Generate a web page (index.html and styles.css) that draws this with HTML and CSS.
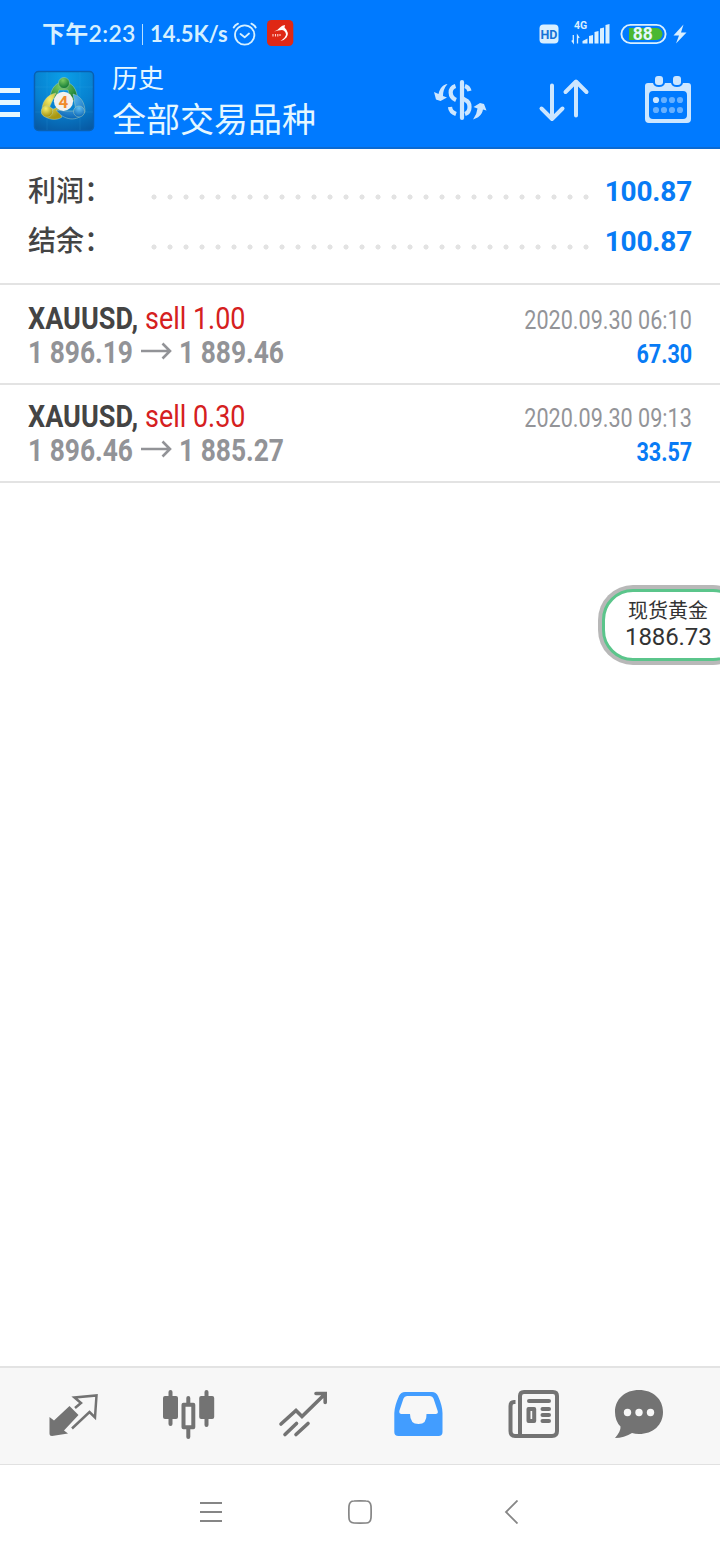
FILE: index.html
```html
<!DOCTYPE html>
<html lang="zh-CN">
<head>
<meta charset="utf-8">
<title>历史</title>
<link rel="stylesheet" href="styles.css">
</head>
<body>
<div class="screen">
  <header class="header">
    <div class="status">
      <span class="clock">下午2:23</span>
      <span class="divider"></span>
      <span class="speed">14.5K/s</span>
      <svg class="alarm" width="26" height="26" viewBox="232 21 26 26"><g fill="none" stroke="#d6f0ff" stroke-width="1.8" stroke-linecap="round" stroke-linejoin="round"><circle cx="244.7" cy="35" r="9.7"/><path d="M233.7 27.5Q235 25 238 23.600M255.700 27.500Q254.400 25 251.400 23.600M240.500 34L244.700 37.300 249 33.500"/></g></svg>
      <svg class="app-badge" width="27" height="27" viewBox="267 20 27 27"><rect x="267" y="20" width="26.300" height="26" rx="4.500" fill="#df2815"/><path d="M274 31.500Q278 30 280 27.500Q282 25.300 285 25L284.500 27.500Q290 33 286.500 37.500Q284.500 40 280.500 41Q285.500 37.500 286 34.500Q285.500 30.500 282 30Q278 30.200 274 31.500Z" fill="#fff"/><path d="M273 34v2.500M275.500 34v2.500M277.800 34v2.500M280 34v2" stroke="#ffd4ce" stroke-width="1.100"/></svg>
      <svg class="status-right" width="150" height="30" viewBox="538 19 150 30">
        <rect x="539.500" y="24.500" width="19" height="19" rx="4" fill="#d9efff"/>
        <text x="549" y="38.700" class="hd">HD</text>
        <text x="574" y="29" class="net">4G</text>
        <path d="M573.300 35v7.500l-1.500-2M577.500 43.500v-8l1.700 2.500" fill="none" stroke="#d9efff" stroke-width="1.300"/>
        <path d="M582.500 41l5-2.500v5h-5zM589 36l4-1v8.500h-4zM594.500 32l4-1v12.500h-4zM600 28.500l4-1v16h-4zM605.500 25l4-1v19.500h-4z" fill="#d9efff"/>
        <rect x="621.400" y="24.900" width="44.200" height="18.200" rx="9.100" fill="none" stroke="#d9efff" stroke-width="1.900"/>
        <path d="M629 28h27.500a6 6 0 0 1 0 12H629z" fill="#4bb832"/>
        <text x="642.700" y="40.300" class="battery">88</text>
        <path d="M683.500 24.500L673.500 35.500H679L676 43.500 686.500 32.500H681Z" fill="#d9efff"/>
      </svg>
    </div>
    <div class="toolbar">
      <div class="menu"><i></i><i></i><i></i></div>
      <svg class="logo" width="62" height="62" viewBox="33 70 62 62">
        <defs>
          <radialGradient id="bg" cx=".5" cy=".1" r="1"><stop offset="0" stop-color="#0a9fe8"/><stop offset=".55" stop-color="#0780cf"/><stop offset="1" stop-color="#0757a0"/></radialGradient>
          <radialGradient id="green" cx=".4" cy=".25" r=".7"><stop offset="0" stop-color="#7dcc62"/><stop offset="1" stop-color="#147c35"/></radialGradient>
          <radialGradient id="gold" cx=".4" cy=".25" r=".7"><stop offset="0" stop-color="#f6ee6b"/><stop offset="1" stop-color="#a79613"/></radialGradient>
          <radialGradient id="blue" cx=".5" cy=".2" r=".8"><stop offset="0" stop-color="#62bff2"/><stop offset="1" stop-color="#0b67b8"/></radialGradient>
        </defs>
        <rect x="34.500" y="71.500" width="59" height="59" rx="4" fill="url(#bg)" stroke="#0960b2" stroke-width="1.500"/>
        <path d="M47 72v58M80 72v58M35 87h58M35 112h58" stroke="#42b3ee" stroke-width=".5" opacity=".3"/>
        <g stroke="#b8d6b8" stroke-width=".45">
          <path d="M50 98C51 88 56 82 64 82C72 82 77 89 77.500 99L71 101L68 90H59L56 99Z" fill="url(#green)"/>
          <path d="M56 93C46 95 41 103 42 114C47 120 57 121 62 117L57 107L54 109L49 108Z" fill="url(#gold)"/>
          <path d="M73 94C81 96 85 103 85 112C78 122 64 121 56 110L65 111L76 111Z" fill="url(#blue)"/>
          <circle cx="64" cy="83" r="5.500" fill="url(#green)"/><circle cx="47" cy="111.500" r="5.700" fill="url(#gold)"/><circle cx="79" cy="111.500" r="5.500" fill="url(#blue)"/>
        </g>
        <circle cx="63.500" cy="101.300" r="9.600" fill="#f3f0ed"/>
        <text x="63.500" y="107.500" class="logo-number">4</text>
      </svg>
      <div class="titles"><div class="subtitle">历史</div><div class="title">全部交易品种</div></div>
      <svg class="currency" width="56" height="44" viewBox="432 78 56 44">
        <g fill="none" stroke="#cce6ff"><path d="M462 82V118" stroke-width="4.200" stroke-linecap="round"/><path d="M455.500 86C449 88 449 97 456 100M465 86Q468.500 87 469.500 91M450 107Q450.500 112 456 114M465 100C471 102 471 112 465 114M462 98L467 101" stroke-width="4.200"/></g>
        <path d="M447.500 84C443 84.500 440 88 438.500 94L434 92 436 99.500 440.500 101 447 97.500 443 96Q443 89 447.500 84ZM473 119.500C478 118 482 115 483 109.500L486.500 110.500 484 104 480 103 473.500 107 477.500 108.500Q477 114 473 119.500Z" fill="#cce6ff"/>
      </svg>
      <svg class="sort" width="52" height="46" viewBox="538 77 52 46"><path d="M552 85.500V119M541.500 108.500L552 119 562.500 108.500M576 115.500V82M565.500 92L576 81.500 586.500 92" fill="none" stroke="#cce6ff" stroke-width="4" stroke-linecap="round" stroke-linejoin="round"/></svg>
      <svg class="calendar" width="48" height="50" viewBox="644 75 48 50">
        <path fill="#cce6ff" fill-rule="evenodd" d="M648 83H653Q654 87 659 87T665 83H671Q672 87 677 87T683 83H688Q691 83 691 86V119Q691 123 687 123H649Q645 123 645 119V86Q645 83 648 83ZM653 91Q649 91 649 95V115Q649 119 653 119H683Q687 119 687 115V95Q687 91 683 91Z"/>
        <rect x="655" y="76" width="8" height="9" rx="3" fill="#cce6ff"/><rect x="673" y="76" width="8" height="9" rx="3" fill="#cce6ff"/>
        <g fill="#66b0ff"><circle cx="656" cy="100" r="3.100" fill="#cce6ff"/><circle cx="664" cy="100" r="3.100"/><circle cx="672" cy="100" r="3.100"/><circle cx="680" cy="100" r="3.100"/><circle cx="656" cy="110" r="3.100"/><circle cx="664" cy="110" r="3.100"/><circle cx="672" cy="110" r="3.100"/><circle cx="680" cy="110" r="3.100"/></g>
      </svg>
    </div>
  </header>

  <main class="content">
    <section class="summary">
      <div class="sum-row"><span class="label">利润：</span><span class="dots"></span><span class="total">100.87</span></div>
      <div class="sum-row"><span class="label">结余：</span><span class="dots"></span><span class="total">100.87</span></div>
    </section>
    <article class="deal first">
      <div class="left"><div class="line"><b class="symbol">XAUUSD,</b><span class="side">sell 1.00</span></div>
      <div class="line prices"><span class="price">1 896.19</span><svg class="arrow" width="32" height="18" viewBox="0 0 32 18"><path d="M1 9H30M22.500 1.500L30 9 22.500 16.500" fill="none" stroke="#929397" stroke-width="2.600"/></svg><span class="price">1 889.46</span></div></div>
      <div class="right"><span class="date">2020.09.30 06:10</span><b class="profit">67.30</b></div>
    </article>
    <article class="deal">
      <div class="left"><div class="line"><b class="symbol">XAUUSD,</b><span class="side">sell 0.30</span></div>
      <div class="line prices"><span class="price">1 896.46</span><svg class="arrow" width="32" height="18" viewBox="0 0 32 18"><path d="M1 9H30M22.500 1.500L30 9 22.500 16.500" fill="none" stroke="#929397" stroke-width="2.600"/></svg><span class="price">1 885.27</span></div></div>
      <div class="right"><span class="date">2020.09.30 09:13</span><b class="profit">33.57</b></div>
    </article>
  </main>

  <nav class="tabs">
    <svg class="tab-quotes" width="52" height="46" viewBox="48 1392 52 46"><path d="M49.500 1417L54 1420.500 69.500 1406 78.500 1415 64 1430.500 68 1433.500 52 1436Q49.500 1436 49.500 1433.500Z" fill="#737373"/><path d="M75 1408L81 1403 74.500 1397.500 96.500 1395.500 95 1417.500 89.500 1412 72 1428.500" fill="none" stroke="#737373" stroke-width="2.500"/></svg>
    <svg class="tab-chart" width="54" height="52" viewBox="162 1388 54 52"><path d="M170.500 1392V1424M206.500 1392V1425M188.300 1398V1405M188.300 1427V1437" stroke="#737373" stroke-width="4" stroke-linecap="round"/><rect x="163" y="1396" width="15" height="23" rx="2" fill="#737373"/><rect x="199.200" y="1396" width="15" height="23" rx="2" fill="#737373"/><rect x="183.500" y="1404.800" width="9.800" height="22.500" fill="#f7f7f7" stroke="#737373" stroke-width="4" stroke-linejoin="round"/></svg>
    <svg class="tab-trade" width="50" height="48" viewBox="278 1390 50 48"><path d="M281 1424L296 1410.500 302 1416.500 325 1394M316 1393.500H325.200V1402.500M285 1434.500L296.500 1423.500M296 1434.500L308 1423.500" fill="none" stroke="#737373" stroke-width="3.600" stroke-linecap="round"/></svg>
    <svg class="tab-history" width="50" height="46" viewBox="393 1391 50 46"><path fill="#429dff" fill-rule="evenodd" d="M405 1392H432Q436 1392 438 1396Q442.500 1406 442.500 1413V1432Q442.500 1436 438.500 1436H398.500Q394.300 1436 394.300 1432V1413Q394.500 1406 399 1396Q401 1392 405 1392ZM407 1396Q404.500 1396 403.500 1398.500L399.300 1411Q399 1414 401.500 1414H410Q410 1424 418.500 1424T426.500 1414H435.500Q438.500 1414 437.700 1411L433.500 1398.500Q432.500 1396 430 1396Z"/></svg>
    <svg class="tab-news" width="52" height="50" viewBox="508 1389 52 50"><path d="M515.500 1402H514Q510.500 1402 510.500 1406V1431Q510.500 1436 515 1436H552Q557 1436 557 1431V1396Q557 1392 553 1392H524Q520 1392 520 1396V1436" fill="none" stroke="#737373" stroke-width="4"/><path d="M529 1401H549M542.500 1409H549M542.500 1415H549M542.500 1421H549" stroke="#737373" stroke-width="4" stroke-linecap="round"/><rect x="528.500" y="1409" width="5.700" height="12" fill="#f7f7f7" stroke="#737373" stroke-width="4" stroke-linejoin="round"/></svg>
    <svg class="tab-chat" width="50" height="50" viewBox="614 1389 50 50"><path d="M639 1390C653 1390 663 1399 663 1412S653 1434 639 1434Q635 1434 632 1433Q624 1438 615 1438Q621 1431 620.500 1426.500Q615 1421 615 1412C615 1399 625 1390 639 1390Z" fill="#737373"/><g fill="#f7f7f7"><circle cx="627.500" cy="1412.500" r="3.700"/><circle cx="639" cy="1412.500" r="3.700"/><circle cx="650.500" cy="1412.500" r="3.700"/></g></svg>
  </nav>
  <footer class="system">
    <svg width="22" height="22" viewBox="0 0 22 22"><path d="M0 2H22M0 11H22M0 20H22" stroke="#868686" stroke-width="1.800"/></svg>
    <svg class="home" width="24" height="24" viewBox="0 0 24 24"><path d="M6 1Q12 .7 18 1Q22.500 1 23 6Q23.300 12 23 18Q22.500 23 18 23Q12 23.300 6 23Q1 22.500 1 18Q.7 12 1 6Q1.500 1 6 1Z" fill="none" stroke="#868686" stroke-width="1.700"/></svg>
    <svg class="back" width="14" height="24" viewBox="0 0 14 24"><path d="M13.500 .5L2 12 13.500 23.500" fill="none" stroke="#868686" stroke-width="1.800"/></svg>
  </footer>
  <aside class="quote"><div class="quote-in"><span class="q-name">现货黄金</span><span class="q-price">1886.73</span></div></aside>
</div>
</body>
</html>
```
FILE: styles.css
```css
* { box-sizing: border-box; }
body { margin: 0; background: #fff; font-family: Roboto, "Noto Sans CJK SC", sans-serif; }
svg { display: block; flex: none; }
.screen { position: relative; width: 720px; height: 1560px; overflow: hidden; display: flex; flex-direction: column; }
.header { height: 149px; background: #007aff; border-bottom: 2px solid #0b6ad2; }
.status { height: 68px; padding-left: 42px; display: flex; align-items: center; color: #d6f0ff; font: 700 23px/30px Lato, "Noto Sans CJK SC", sans-serif; white-space: nowrap; }
.clock { width: 100px; font-weight: 600; letter-spacing: .3px; margin-top: -2px; }
.divider { width: 1px; height: 21px; background: #b8e0ff; }
.speed { width: 82px; margin: -1px 0 0 7px; font-size: 22px; }
.app-badge { margin: -2px 0 0 9px; }
.status-right { margin-left: 244px; }
.hd { font: 700 12.5px Roboto, sans-serif; fill: #1673d6; text-anchor: middle; }
.net { font: 700 10.5px Roboto, sans-serif; fill: #d9efff; }
.battery { font: 700 17.5px Roboto, sans-serif; fill: #e4f7ff; text-anchor: middle; }
.toolbar { height: 79px; display: flex; align-items: flex-start; }
.menu { width: 20px; margin-top: 20px; display: flex; flex-direction: column; gap: 7px; }
.menu i { height: 5px; background: #e5f7ff; }
.logo { margin: 2px 0 0 13px; }
.logo-number { font: 700 17px Roboto, sans-serif; fill: #f18b2b; text-anchor: middle; }
.titles { width: 320px; margin: -4px 0 0 17px; color: #e5f7ff; white-space: nowrap; font-family: "Noto Sans CJK SC", sans-serif; }
.subtitle { font-size: 26px; line-height: 26px; }
.title { font-size: 34px; line-height: 34px; margin-top: 11px; }
.currency { margin: 10px 0 0 0; }
.sort { margin: 9px 0 0 50px; }
.calendar { margin: 7px 0 0 54px; }
.content { flex: 1; }
.summary { height: 136px; padding: 17px 28px 0; border-bottom: 2px solid #e3e3e3; }
.sum-row { height: 50px; display: flex; align-items: center; }
.label { width: 117.5px; margin-top: -4px; color: #444; font: 500 28px/40px "Noto Sans CJK SC", sans-serif; white-space: nowrap; }
.dots { width: 448px; height: 16px; margin-top: 11px; background: radial-gradient(circle, #e3e3e3 0 2.2px, transparent 2.9px) 0 0 / 16px 16px; }
.total { flex: 1; margin-top: 2px; text-align: right; color: #087bf5; font: 700 28px/32px Roboto, sans-serif; letter-spacing: -.2px; }
.deal { height: 98px; padding: 14px 28px 0; display: flex; justify-content: space-between; border-bottom: 2px solid #e3e3e3; white-space: nowrap; }
.deal.first { height: 100px; padding-top: 16px; }
.line { display: flex; height: 34px; font-size: 32px; line-height: 34px; }
.symbol, .side, .price { display: block; transform: scaleX(.824); transform-origin: left center; }
.symbol { width: 117px; color: #444; transform: scaleX(.845); }
.side { color: #d52020; transform: scaleX(.842); }
.price { width: 112px; color: #929397; font-weight: 700; }
.arrow { margin-top: 7px; }
.arrow + .price { margin-left: 7px; }
.right { display: flex; flex-direction: column; align-items: flex-end; font-size: 26px; line-height: 34px; padding-top: 2px; }
.date, .profit { transform: scaleX(.83); transform-origin: right center; }
.date { color: #939498; }
.profit { color: #087bf5; }
.tabs { height: 99px; flex: none; background: #f7f7f7; border-top: 2px solid #e3e3e3; border-bottom: 1px solid #e1e1e1; display: flex; align-items: center; padding: 0 56px 4px 48px; }
.tab-quotes { margin-top: 2px; }
.tab-chart, .tab-trade { margin-left: 62px; }
.tab-history, .tab-news { margin-left: 65px; }
.tab-chat { margin-left: 54px; }
.system { height: 95px; flex: none; display: flex; align-items: center; padding: 0 0 1px 200px; }
.home { margin-left: 126px; }
.back { margin-left: 132px; }
.quote { position: absolute; left: 598px; top: 585px; width: 150px; height: 80px; padding: 4px; border-radius: 35px; background: #b8b8b8; }
.quote-in { height: 72px; border: 3px solid #5bc58b; border-radius: 31px; background: #fff; padding: 4px 0 0 20px; display: flex; flex-direction: column; color: #333; }
.q-name { margin-left: 3px; font: 400 20px/28px "Noto Sans CJK SC", sans-serif; }
.q-price { font-size: 24px; line-height: 26px; letter-spacing: -.1px; }
```
